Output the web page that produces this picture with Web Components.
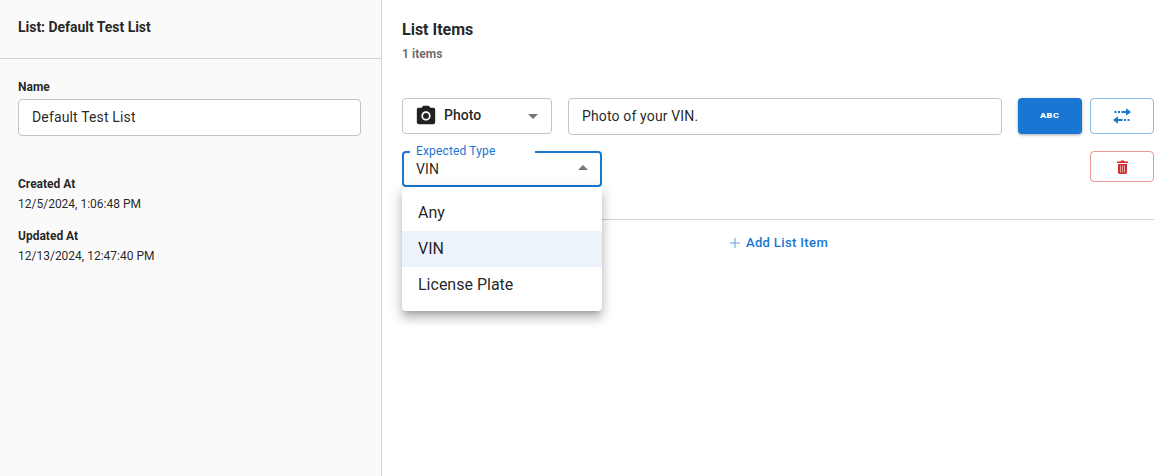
<!DOCTYPE html>
<html lang="en"><head><meta charset="utf-8"><title>List</title>
<style>
html,body{margin:0;padding:0;height:100%;overflow:hidden;background:#fff;font-family:Roboto,"Liberation Sans",sans-serif;color:rgba(0,0,0,.87)}
</style></head><body>
<list-app>
  <detail-panel slot="side" heading="List: Default Test List">
    <text-field label="Name" value="Default Test List"></text-field>
    <meta-item label="Created At" value="12/5/2024, 1:06:48 PM" style="margin-top:40px"></meta-item>
    <meta-item label="Updated At" value="12/13/2024, 12:47:40 PM" style="margin-top:16px"></meta-item>
  </detail-panel>
  <items-panel slot="main" heading="List Items" count="1 items">
    <item-row>
      <type-select></type-select>
      <plain-input value="Photo of your VIN."></plain-input>
      <tool-button slot="actions" kind="primary"><span style="font:900 8px/1 Roboto,sans-serif;letter-spacing:.5px;transform:scaleX(1.12);display:block">ABC</span></tool-button>
      <tool-button slot="actions" kind="outline"><svg width="20" height="20" viewBox="0 0 20 20" fill="#1976d2"><path d="M2.500 5h2v2h-2zM6 5h2v2H6zM9.500 5H14V2.300L19 6l-5 3.700V7H9.500zM17.500 13h-2v2h2zM14 13h-2v2h2zM10.500 13H6v-2.700L1 14l5 3.700V15h4.500z"/></svg></tool-button>
    </item-row>
    <item-row second>
      <expected-select label="Expected Type" value="VIN"></expected-select>
      <tool-button slot="actions" kind="danger"><svg width="11" height="14" viewBox="0 0 11 14"><path fill="#d32f2f" d="M1 4h9v8.600c0 .8-.6 1.400-1.400 1.400H2.400C1.600 14 1 13.400 1 12.600z"/><path fill="#d32f2f" d="M0 1.500h3.400L3.900.5h3.200l.5 1H11V3H0z"/><path stroke="#f0a0a0" stroke-width="1" d="M3.500 5.500v7M5.500 5.500v7M7.500 5.500v7"/></svg></tool-button>
    </item-row>
    <add-item>Add List Item</add-item>
  </items-panel>
</list-app>
<script>
const def=(name,css,html)=>customElements.define(name,class extends HTMLElement{
  connectedCallback(){ if(this.shadowRoot)return; const r=this.attachShadow({mode:'open'});
    const a=n=>this.getAttribute(n)||'';
    r.innerHTML=`<style>${css}</style>`+html(a,this); }
});
def('list-app',`:host{display:flex;width:1172px;height:476px}`,()=>`<slot name="side"></slot><slot name="main"></slot>`);
def('detail-panel',`:host{display:block;box-sizing:border-box;width:382px;height:476px;background:#fafafa;border-right:1px solid #d4d4d4}
 header{box-sizing:border-box;height:59px;padding:18px 18px 0;border-bottom:1px solid #d4d4d4;font:700 14px/18px Roboto,sans-serif;letter-spacing:-.03px;color:rgba(0,0,0,.87)}
 .b{padding:20px 20px 0 18px}`,a=>`<header>${a('heading')}</header><div class="b"><slot></slot></div>`);
def('text-field',`:host{display:block}
 label{display:block;font:700 12px/16px Roboto,sans-serif;margin-bottom:4px;color:rgba(0,0,0,.87)}
 div{box-sizing:border-box;height:37px;width:343px;background:#fff;border:1px solid #c4c4c4;border-radius:4px;padding:0 13px;font:400 14px/35px Roboto,sans-serif;letter-spacing:.15px;color:rgba(0,0,0,.87)}`,
 a=>`<label>${a('label')}</label><div>${a('value')}</div>`);
def('meta-item',`:host{display:block;font:12px/16px Roboto,sans-serif;color:rgba(0,0,0,.87)}
 b{display:block;font-weight:700;margin-bottom:4px}`,a=>`<b>${a('label')}</b><span>${a('value')}</span>`);
def('items-panel',`:host{display:block;flex:1;box-sizing:border-box;padding:20px 18px 0 20px;min-width:0}
 h2{margin:0;font:700 16px/19px Roboto,sans-serif;color:rgba(0,0,0,.87)}
 p{margin:7px 0 36px;font:700 12px/16px Roboto,sans-serif;letter-spacing:.05px;color:rgba(0,0,0,.6)}`,
 a=>`<h2>${a('heading')}</h2><p>${a('count')}</p><slot></slot>`);
def('item-row',`:host{display:flex;justify-content:space-between;align-items:flex-start;margin-bottom:14px}
 :host([second]){margin-bottom:0}
 .l{display:flex;gap:16px;flex:1}.r{display:flex;gap:8px;margin-left:16px}
 :host([second]) .r{margin-top:2px}`,()=>`<div class="l"><slot></slot></div><div class="r"><slot name="actions"></slot></div>`);
def('type-select',`:host{display:flex;align-items:center;box-sizing:border-box;width:150px;height:36px;border:1px solid #c4c4c4;border-radius:4px;padding:0 13px 0 14px;flex:none}
 svg.c{margin:-3px 7px 0 -2px;flex:none}
 span{flex:1;font:500 14px/20px Roboto,sans-serif;color:rgba(0,0,0,.87);margin-top:-3px}
 i{width:0;height:0;border:5px solid transparent;border-top-color:#757575;border-bottom:0}`,
 ()=>`<svg class="c" width="22" height="22" viewBox="0 0 24 24" fill="#212121"><circle cx="12" cy="13" r="3.200"/><path d="M9 2 7.170 4H4c-1.100 0-2 .900-2 2v14c0 1.100.900 2 2 2h16c1.100 0 2-.900 2-2V6c0-1.100-.900-2-2-2h-3.170L15 2zm3 16c-2.760 0-5-2.240-5-5s2.240-5 5-5 5 2.240 5 5-2.240 5-5 5z"/></svg><span>Photo</span><i></i>`);
def('plain-input',`:host{display:block;box-sizing:border-box;flex:1;height:37px;border:1px solid #c4c4c4;border-radius:4px;padding:0 13px;font:400 14px/35px Roboto,sans-serif;letter-spacing:.15px;color:rgba(0,0,0,.87)}`,a=>a('value'));
def('tool-button',`:host{display:flex;align-items:center;justify-content:center;box-sizing:border-box;width:64px;height:36px;border-radius:4px;flex:none}
 :host([kind=primary]){background:#1976d2;color:#fff;box-shadow:0 1px 3px rgba(0,0,0,.35)}
 :host([kind=outline]){border:1px solid rgba(25,118,210,.5)}
 :host([kind=danger]){border:1px solid rgba(211,47,47,.5);height:31px}`,()=>`<slot></slot>`);
def('expected-select',`:host{display:block;position:relative;box-sizing:border-box;width:200px;height:36px;margin-top:2px;border:2px solid #1976d2;border-radius:4px;flex:none;background:#fff}
 .lg{position:absolute;left:6px;top:-9px;background:#fff;padding:0 6px;font:400 12px/14px Roboto,sans-serif;letter-spacing:.15px;color:#1976d2;height:14px;width:125px;box-sizing:border-box}
 .v{position:absolute;left:12px;top:7px;font:400 14px/18px Roboto,sans-serif;letter-spacing:.15px;color:rgba(0,0,0,.87)}
 i{position:absolute;right:12px;top:12px;width:0;height:0;border:5px solid transparent;border-bottom-color:#757575;border-top:0}
 ul{position:absolute;z-index:5;left:-2px;top:34px;width:200px;margin:0;padding:8px 0;list-style:none;background:#fff;border-radius:4px;box-shadow:0 5px 5px -3px rgba(0,0,0,.2),0 8px 10px 1px rgba(0,0,0,.14),0 3px 14px 2px rgba(0,0,0,.12)}
 li{height:36px;padding:0 16px;font:400 16px/36px Roboto,sans-serif;color:rgba(0,0,0,.87)}
 li.s{background:#ecf3fa}`,
 a=>`<span class="lg">${a('label')}</span><span class="v">${a('value')}</span><i></i><ul><li>Any</li><li class="s">VIN</li><li>License Plate</li></ul>`);
def('add-item',`:host{display:flex;align-items:center;justify-content:center;gap:6px;margin-top:32px;border-top:1px solid #d4d4d4;padding:13px 0 0 2px;font:500 13px/20px Roboto,sans-serif;letter-spacing:.37px;color:#1976d2}
 svg{flex:none}`,()=>`<svg width="10" height="10" viewBox="0 0 10 10" fill="none" stroke="#5a9fe0"><path d="M5 0v10M0 5h10"/></svg><slot></slot>`);
</script>
</body></html>
